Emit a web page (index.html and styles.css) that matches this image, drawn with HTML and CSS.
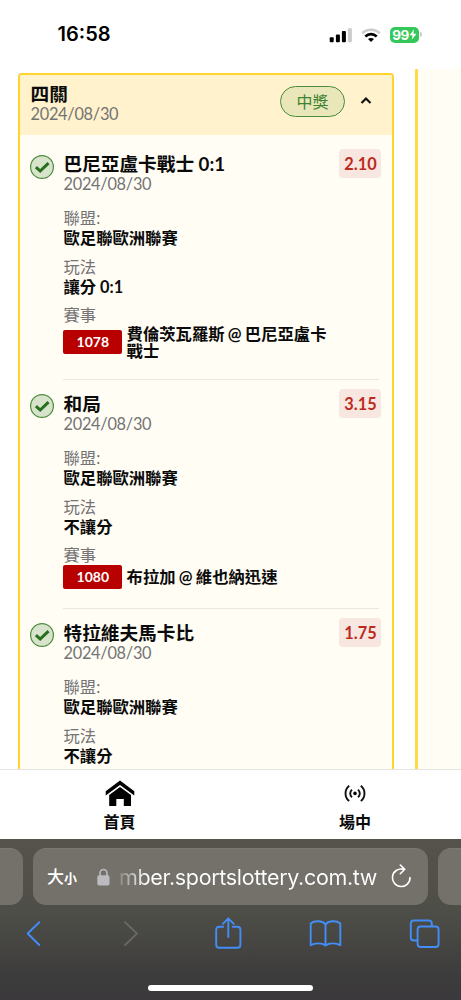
FILE: index.html
```html
<!DOCTYPE html>
<html lang="zh-Hant">
<head>
<meta charset="utf-8">
<meta name="viewport" content="width=device-width">
<title>投注紀錄</title>
<link rel="stylesheet" href="styles.css">
</head>
<body>
<svg width="0" height="0" class="defs">
  <symbol id="check" viewBox="0 0 24 24">
    <circle cx="12" cy="12" r="11.4" fill="#d8e3cc" stroke="#4c8c3f" stroke-width="1.2"/>
    <path d="M5.9 12.1 10.2 16 18.5 8.1" fill="none" stroke="#28701d" stroke-width="3"/>
  </symbol>
</svg>

<header class="status">
  <span class="time">16:58</span>
  <div class="indicators">
    <svg width="24" height="16" viewBox="0 0 24 16">
      <rect x=".7" y="10.2" width="4" height="5.1" rx="1"/><rect x="6.9" y="7.4" width="4" height="7.9" rx="1"/><rect x="12.9" y="4" width="4" height="11.3" rx="1"/><rect x="18.9" y="1.2" width="4" height="14.1" rx="1" fill="#ccc"/>
    </svg>
    <svg class="wifi" width="20" height="16" viewBox="0 0 20 16">
      <path d="M1.2 6.2C6 1.5 14 1.5 18.8 6.2" fill="none" stroke="#ccc" stroke-width="2.6"/>
      <path d="M4.3 9.4C7.6 6.4 12.4 6.4 15.7 9.4" fill="none" stroke="#000" stroke-width="2.7"/>
      <path d="M7 12.1c1.8-1.5 4.2-1.5 6 0L10 15.1Z"/>
    </svg>
    <div class="battery"><span>99</span><svg width="8" height="11" viewBox="0 0 8 11"><path d="M5.1.2.5 6.2h3L2.8 10.8 7.5 4.7H4.4Z" fill="#fff"/></svg></div>
    <i class="battery-cap"></i>
  </div>
</header>

<main class="slips">
  <section class="card">
    <div class="card-head">
      <div class="card-name"><h1>四關</h1><p class="date">2024/08/30</p></div>
      <span class="won">中獎</span>
      <svg class="caret" width="12" height="9" viewBox="0 0 12 9"><path d="M1.5 7.1 6 2.4 10.5 7.1" fill="none" stroke="#111" stroke-width="2.1"/></svg>
    </div>
    <div class="legs">
      <article class="leg">
        <svg class="check"><use href="#check"/></svg>
        <div class="leg-body">
          <h2>巴尼亞盧卡戰士 0:1</h2><p class="date">2024/08/30</p>
          <dl><dt>聯盟:</dt><dd>歐足聯歐洲聯賽</dd><dt>玩法</dt><dd>讓分 0:1</dd><dt>賽事</dt></dl>
          <div class="match"><span class="code">1078</span><span class="teams">費倫茨瓦羅斯 @ 巴尼亞盧卡戰士</span></div>
        </div>
        <span class="odds">2.10</span>
      </article>
      <article class="leg">
        <svg class="check"><use href="#check"/></svg>
        <div class="leg-body">
          <h2>和局</h2><p class="date">2024/08/30</p>
          <dl><dt>聯盟:</dt><dd>歐足聯歐洲聯賽</dd><dt>玩法</dt><dd>不讓分</dd><dt>賽事</dt></dl>
          <div class="match"><span class="code">1080</span><span class="teams">布拉加 @ 維也納迅速</span></div>
        </div>
        <span class="odds">3.15</span>
      </article>
      <article class="leg">
        <svg class="check"><use href="#check"/></svg>
        <div class="leg-body">
          <h2>特拉維夫馬卡比</h2><p class="date">2024/08/30</p>
          <dl><dt>聯盟:</dt><dd>歐足聯歐洲聯賽</dd><dt>玩法</dt><dd>不讓分</dd></dl>
        </div>
        <span class="odds">1.75</span>
      </article>
    </div>
  </section>
  <section class="next-card"></section>
</main>

<nav class="site-nav">
  <a class="nav-item">
    <svg width="30" height="28" viewBox="0 0 30 28"><path d="M15 .5 29.3 11.2V15.5L15 5 .7 15.500V11.200Z"/><path d="M15 6.900 26 14.900V26H18.800V19H11.300V26H4.200V14.900Z"/></svg>
    <span>首頁</span>
  </a>
  <a class="nav-item">
    <svg width="30" height="28" viewBox="0 0 30 28"><circle cx="15" cy="13.400" r="1.800"/><path d="M12 9.600C9.600 11.800 9.600 15 12 17.200M18 9.600C20.400 11.800 20.400 15 18 17.200M9.200 5.800C4.300 9.600 4.300 17.200 9.200 21M20.800 5.800C25.700 9.600 25.700 17.200 20.800 21" fill="none" stroke="#111" stroke-width="1.900"/></svg>
    <span>場中</span>
  </a>
</nav>

<footer class="browser">
  <div class="tabs">
    <div class="tab side"></div>
    <div class="tab address">
      <span class="aa">大<small>小</small></span>
      <svg class="lock" width="13" height="18" viewBox="0 0 13 18"><path d="M3 8V5a3.500 3.500 0 0 1 7 0V8" fill="none" stroke="#bdbbc0" stroke-width="1.600"/><rect x=".3" y="7.300" width="12.200" height="10.200" rx="1.800" fill="#bdbbc0"/></svg>
      <span class="url">mber.sportslottery.com.tw</span>
      <svg class="reload" width="22" height="26" viewBox="0 0 22 26"><path d="M13.200 6.200A8.800 8.800 0 1 0 20 14.500M10.300 2 14.800 6.300 10.300 10.700" fill="none" stroke="#fff" stroke-width="1.600" stroke-linecap="round" stroke-linejoin="round"/></svg>
    </div>
    <div class="tab side"></div>
  </div>
  <div class="tools">
    <svg width="30" height="34" viewBox="0 0 30 34"><path d="M20.300 6.200 8.700 17.500 20.300 29"/></svg>
    <svg class="off" width="30" height="34" viewBox="0 0 30 34"><path d="M10 6.200 22 17.500 10 29"/></svg>
    <svg width="30" height="34" viewBox="0 0 30 34"><path d="M11.200 10.700H7.200Q4.200 10.700 4.200 13.700V28.800Q4.200 31.800 7.200 31.800H25.400Q28.400 31.800 28.400 28.800V13.700Q28.400 10.700 25.400 10.700H20.800M16.300 21V2.500M10.800 7.800 16.300 2.300 21.800 7.800"/></svg>
    <svg class="book" width="34" height="34" viewBox="0 0 34 34"><path d="M17.500 8.500C14.500 4.500 6.500 4.300 2.700 7.500V29.200C6.500 26.700 14 26.700 17.500 29.500 21 26.700 28.500 26.700 32.300 29.200V7.500C28.500 4.300 20.500 4.500 17.500 8.500V29.500"/></svg>
    <svg class="pages" width="32" height="34" viewBox="0 0 32 34"><rect x="8.600" y="10.500" width="21" height="20.500" rx="3"/><path d="M8.300 24.500H4.800Q1.800 24.500 1.800 21.500V7.500Q1.800 4.500 4.800 4.500H19.800Q22.800 4.500 22.800 7.500V10"/></svg>
  </div>
  <div class="home-bar"></div>
</footer>
</body>
</html>
```
FILE: styles.css
```css
* { box-sizing: border-box; }
body { margin: 0; width: 461px; height: 1000px; overflow: hidden; background: #fff; color: #0b0b0b; font-family: Lato, "Noto Sans CJK TC", sans-serif; display: flex; flex-direction: column; }
h1, h2, p, dl, dd { margin: 0; }
svg { display: block; flex: none; }
.defs { position: absolute; }

.status { height: 69px; flex: none; padding: 21px 39px 0 57.500px; display: flex; justify-content: space-between; }
.time { font: 600 20px/27px Inter, sans-serif; color: #000; letter-spacing: 0; }
.indicators { display: flex; align-items: center; height: 27px; }
.wifi { margin: 0 9px 0 8px; }
.battery { width: 29px; height: 16px; border-radius: 5px; background: #34c759; display: flex; align-items: center; justify-content: center; color: #fff; font: 700 13.500px/16px Inter, sans-serif; letter-spacing: -.6px; }
.battery-cap { width: 2px; height: 5px; margin-left: 1px; border-radius: 0 2px 2px 0; background: #ccc; }

.slips { height: 700px; flex: none; overflow: hidden; display: flex; gap: 21px; padding-left: 18px; }
.card { width: 376px; flex: none; height: 760px; margin-top: 4px; border: 2px solid #ffd52b; border-radius: 4px; background: #fffdf4; overflow: hidden; }
.next-card { flex: 1; height: 700px; border-left: 3px solid #ffdb45; background: #fffdf4; }
.card-head { height: 60px; background: #fff2cc; padding: 9px 20px 0 10.500px; display: flex; align-items: flex-start; }
.card-name { flex: 1; }
h1, h2 { font-size: 18.67px; line-height: 20px; font-weight: 700; white-space: nowrap; }
.date { font-size: 16.330px; line-height: 19px; letter-spacing: -.27px; color: #747474; }
.won { width: 65px; height: 31px; margin-top: 2px; border: 1px solid #4a8b3c; border-radius: 16px; background: #e9e7b9; color: #3e8334; font-size: 16px; line-height: 29px; text-align: center; }
.caret { margin: 12px 0 0 15px; }

.legs { padding-top: 5px; }
.leg { display: flex; align-items: flex-start; padding: 0 11.500px 0 10px; }
.check { width: 24px; height: 24px; margin: 14.500px 0 0 .2px; }
.leg-body { width: 316px; flex: none; margin: 0 -40px 0 9.300px; padding: 14px 0 19px; border-bottom: 1px solid #e9e7e2; }
.odds { width: 42px; height: 29px; flex: none; margin: 9px 0 0 auto; border-radius: 4px; background: #f8e6e0; color: #bb2a20; font-weight: 700; font-size: 16.330px; line-height: 30px; text-align: center; }
dl { margin-top: 15.400px; font-size: 16.330px; line-height: 20px; }
dt { color: #747474; }
dd { font-weight: 700; margin-bottom: 8.300px; }
.match { display: flex; align-items: center; gap: 4.500px; font-weight: 700; font-size: 16.330px; line-height: 17.500px; word-spacing: -.7px; }
.code { width: 58.600px; height: 24px; flex: none; border-radius: 2px; background: #b80000; color: #fff; font-size: 14px; line-height: 24px; text-align: center; }
.teams { width: 208px; }

.site-nav { height: 70px; flex: none; overflow: hidden; border-top: 1px solid #e3e5e3; background: #fff; display: grid; grid-template-columns: 239px 232px; }
.nav-item { display: flex; flex-direction: column; align-items: center; padding-top: 10px; gap: 3.500px; font-size: 16px; line-height: 20px; font-weight: 700; }

.browser { height: 161px; flex: none; overflow: hidden; background: linear-gradient(#55534b, #4e4e48 45%, #3d3c3c 85%, #3b393b); }
.tabs { display: grid; grid-template-columns: 47px 395px 47px; gap: 10px; margin: 9px 0 0 -24px; width: 509px; }
.tab { height: 57px; border-radius: 13px; background: #74716a; border-top: 1px solid #7b7871; }
.address { display: flex; align-items: center; padding-left: 14px; color: #fff; }
.aa { font: 500 17px/24px "Noto Sans CJK TC", sans-serif; width: 50px; white-space: nowrap; }
.aa small { font-size: 13px; font-weight: 700; }
.lock { margin: 0 9px 0 0; }
.url { font: 400 21.500px/30px Inter, sans-serif; letter-spacing: -.33px; width: 260px; white-space: nowrap; background: linear-gradient(90deg, #8b8982, #fff 28px); background-clip: text; -webkit-background-clip: text; color: transparent; }
.reload { margin: -3px 0 0 11px; }
.tools { display: flex; justify-content: space-between; padding: 11px 20.500px 0 19px; }
.tools svg { fill: none; stroke: #438df7; stroke-width: 1.900; stroke-linecap: round; stroke-linejoin: round; }
.tools .off { stroke: #686763; }
.home-bar { width: 165px; height: 6px; margin: 35px auto 0; border-radius: 3px; background: #fff; }
```
